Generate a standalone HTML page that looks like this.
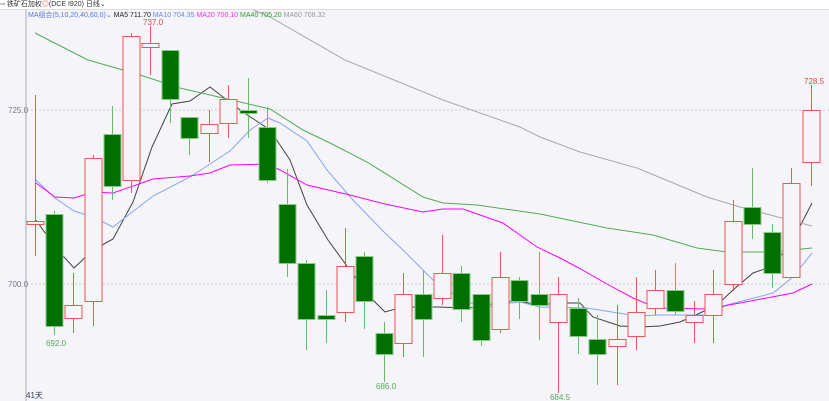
<!DOCTYPE html>
<html><head><meta charset="utf-8">
<style>
html,body{margin:0;padding:0;width:829px;height:401px;overflow:hidden;background:#f4f4f9;font-family:"Liberation Sans","Noto Sans CJK SC",sans-serif;}
#top{position:absolute;left:0;top:0;width:829px;height:9px;background:#fff;border-bottom:1px solid #ddd;font-size:7px;line-height:9px;color:#333;white-space:nowrap}
#leg{position:absolute;left:28px;top:10px;font-size:7px;line-height:11px;white-space:nowrap}
svg{position:absolute;left:0;top:0}
</style></head><body>
<svg id="s" width="829" height="401" xmlns="http://www.w3.org/2000/svg">
<rect x="25" y="10" width="2" height="391" fill="#cfcfd6"/>
<line x1="27" y1="110" x2="829" y2="110" stroke="#ccc" stroke-dasharray="2,2"/>
<line x1="27" y1="284" x2="829" y2="284" stroke="#ccc" stroke-dasharray="2,2"/>
<text x="8" y="113" font-size="8" fill="#778">725.0</text>
<text x="8" y="287" font-size="8" fill="#778">700.0</text>
<text x="26" y="398" font-size="8" fill="#336">41天</text>
<text x="143" y="25" font-size="8" fill="#e44">737.0</text>
<text x="46" y="346" font-size="8" fill="#5a5">692.0</text>
<text x="376" y="389" font-size="8" fill="#5a5">686.0</text>
<text x="550" y="400" font-size="8" fill="#5a5">684.5</text>
<text x="804" y="84" font-size="8" fill="#e44">728.5</text>
<g id="g"></g>
</svg>
<div id="top">&#9643;&#9643; 铁矿石加权<span style="color:#e44">◎</span>(DCE I920) 日线⌄</div>
<div id="leg"><span style="color:#5577dd">MA组合(5,10,20,40,60,0)⌄</span> <span style="color:#222">MA5 711.70</span> <span style="color:#6688ee">MA10 704.35</span> <span style="color:#e3e">MA20 700.10</span> <span style="color:#393">MA40 705.20</span> <span style="color:#999">MA60 708.32</span></div>
<script>
var C=[[35,221,224,95,256,1],[54,214,326,211,335,0],[73,305,318,273,333,1],[93,158,301,155,326,1],[112,134,186,106,200,0],[131,36,180,33,193,1],[150,43,47,26,75,1],[170,50,99,50,123,0],[189,117,138,117,155,0],[209,124,133,110,162,1],[228,99,123,85,138,1],[248,110,113,78,138,0],[267,127,180,107,183,0],[287,204,263,169,277,0],[306,263,319,260,350,0],[326,315,319,290,343,0],[345,266,312,228,322,1],[364,256,301,252,329,0],[384,333,354,322,382,0],[403,294,343,273,357,1],[423,294,319,271,357,0],[442,273,298,235,305,1],[461,273,309,266,322,0],[481,294,340,294,346,0],[500,277,329,252,333,1],[519,280,301,277,319,0],[539,294,305,252,340,0],[558,294,322,277,393,1],[578,308,336,298,354,0],[597,339,354,315,385,0],[617,339,346,305,385,1],[636,312,336,277,350,1],[655,290,308,270,315,1],[675,290,311,263,315,0],[694,315,322,301,343,1],[713,294,315,270,343,1],[733,221,284,200,291,1],[752,207,224,168,239,0],[772,232,273,224,288,0],[791,183,277,168,277,1],[811,110,162,85,186,1]];
var L=[["#444","36,220 55,247 74,268 93,250 113,239 133,202 152,147 172,104 190,101 210,87 240,110 270,130 290,160 307,205 328,240 352,273 368,295 385,312 403,307 437,307 470,308 503,302 520,301 537,305 560,303 580,303 593,317 620,326 640,327 660,326 680,322 700,313 717,305 733,290 753,273 773,266 793,240 812,203"],
["#88a4f0","36,180 55,198 74,211 93,217 113,227 153,196 190,177 230,151 250,130 268,118 280,123 307,141 327,170 353,200 385,233 403,250 433,280 457,297 483,308 503,304 520,302 540,307 587,308 637,316 660,315 707,315 727,305 773,293 793,277 812,253"],
["#f0f","36,183 55,197 74,198 93,192 113,193 153,179 190,176 210,173 230,165 267,164 280,170 307,185 350,195 385,204 423,212 443,209 463,209 503,223 537,247 560,258 577,267 607,284 633,298 657,308 707,309 740,303 793,293 812,284"],
["#5a5","35,33 88,60 123,70 140,75 180,88 223,98 270,109 303,130 330,143 367,162 423,197 443,203 477,205 540,214 607,228 653,235 697,248 727,252 773,252 812,248"],
["#aaa","230,0 270,17 345,60 443,100 520,127 540,137 580,152 637,168 707,197 740,207 812,226"]];
var h='';
L.forEach(function(l){h+='<polyline fill="none" stroke="'+l[0]+'" stroke-width="1" points="'+l[1]+'"/>';});
C.forEach(function(c){var x=c[0],r=c[5];
var wc=r?'#e55':'#6b6';
h+='<line x1="'+(x+.5)+'" y1="'+c[3]+'" x2="'+(x+.5)+'" y2="'+c[4]+'" stroke="'+wc+'"/>';
var hh=Math.max(c[2]-c[1],2);
if(r)h+='<rect x="'+(x-8)+'" y="'+(c[1]+.5)+'" width="17" height="'+hh+'" fill="#f4f4f9" stroke="#e55"/>';
else h+='<rect x="'+(x-8)+'" y="'+(c[1]+.5)+'" width="17" height="'+hh+'" fill="#007000" stroke="#8c8"/>';});
document.getElementById('g').innerHTML=h;
</script>
</body></html>
